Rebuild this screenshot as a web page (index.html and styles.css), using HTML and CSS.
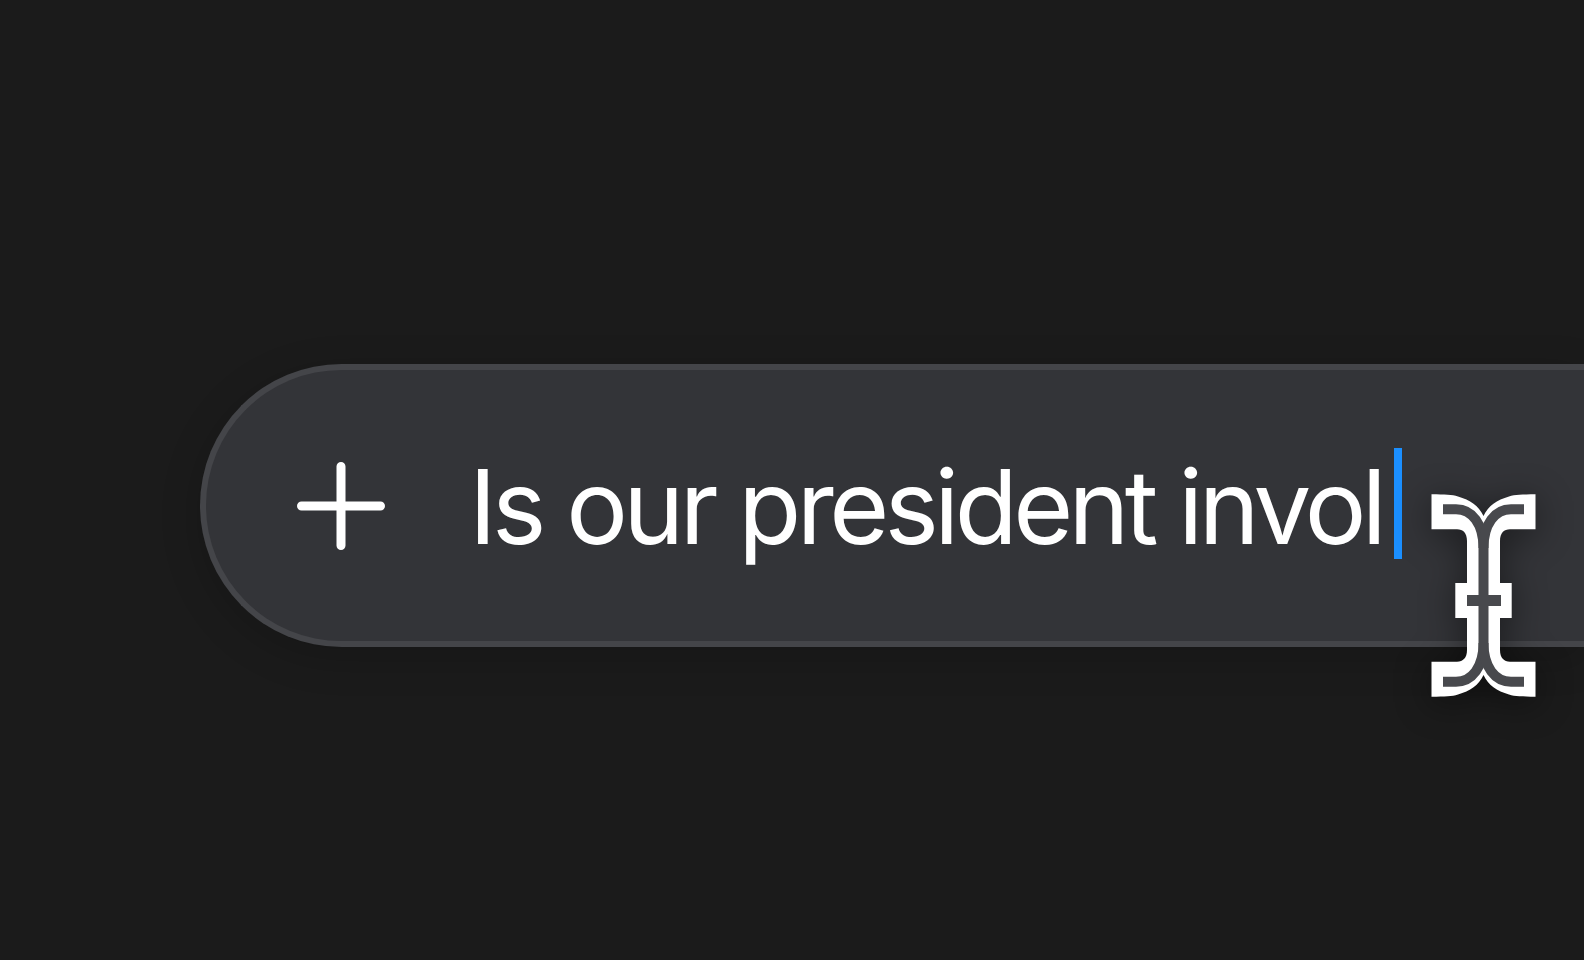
FILE: index.html
```html
<!DOCTYPE html>
<html lang="en">
<head>
<meta charset="utf-8">
<title>Input</title>
<link rel="stylesheet" href="styles.css">
</head>
<body>
<main class="stage">
  <div class="bar">
    <svg class="plus" width="88" height="88" viewBox="0 0 88 88" aria-hidden="true">
      <path d="M44 4.5V83.5M4.5 44H83.5" stroke="#fff" stroke-width="9" stroke-linecap="round" fill="none"/>
    </svg>
    <span class="query">Is our president invol</span>
    <span class="caret"></span>
  </div>
</main>
<svg class="ibeam" width="130" height="230" viewBox="1420 480 130 230" aria-hidden="true">
  <path fill="#fff" d="M1431.5 494.3C1445 494.5 1452 494.5 1458 496.5C1470 500 1479 506 1483.5 516C1488 506 1497 500 1509 496.5C1515 494.5 1522 494.5 1535.5 494.3V529.3H1510C1504 529.3 1500 533 1500 541V583H1511.7V618H1500V650C1500 658 1504 661.7 1510 661.7H1535.5V696.7C1522 696.5 1515 696.5 1509 694.5C1497 691 1488 685 1483.5 675C1479 685 1470 691 1458 694.5C1452 696.5 1445 696.5 1431.5 696.7V661.7H1457C1463 661.7 1467 658 1467 650V618H1455.3V583H1467V541C1467 533 1463 529.3 1457 529.3H1431.5Z"/>
  <g fill="none" stroke="#48494d" stroke-width="10" stroke-linecap="butt">
    <path d="M1443 509.3H1456C1472 509.3 1483.5 524 1483.5 548V643C1483.5 667 1472 681.7 1456 681.7H1443"/>
    <path d="M1524 509.3H1511C1495 509.3 1483.5 524 1483.5 548M1483.5 643C1483.5 667 1495 681.7 1511 681.7H1524"/>
  </g>
  <rect x="1467" y="595" width="34" height="11" fill="#48494d"/>
</svg>
</body>
</html>
```

FILE: styles.css
```css
html, body {
  margin: 0;
  padding: 0;
  background: #1b1b1b;
  width: 1584px;
  height: 960px;
  overflow: hidden;
}

body {
  position: relative;
  font-family: Inter, "Noto Sans", "Liberation Sans", sans-serif;
}

.stage {
  padding-top: 364px;
  padding-left: 200px;
}

.bar {
  box-sizing: border-box;
  height: 283px;
  background: #333438;
  border: 6px solid #444549;
  border-right: none;
  border-radius: 142px 0 0 142px;
  display: flex;
  align-items: center;
  padding-left: 91px;
  box-shadow: 0 10px 40px rgba(0, 0, 0, 0.18);
}

.plus {
  flex: none;
  display: block;
}

.query {
  margin-left: 84px;
  color: #ffffff;
  font-size: 103px;
  line-height: 1;
  letter-spacing: -4.6px;
  white-space: nowrap;
  margin-top: 2px;
}

.caret {
  flex: none;
  width: 8px;
  height: 111px;
  background: #1b8fff;
  margin-left: 12px;
  margin-top: -4px;
}

.ibeam {
  position: absolute;
  left: 1420px;
  top: 480px;
  filter: drop-shadow(0 6px 18px rgba(0, 0, 0, 0.45));
}
```
